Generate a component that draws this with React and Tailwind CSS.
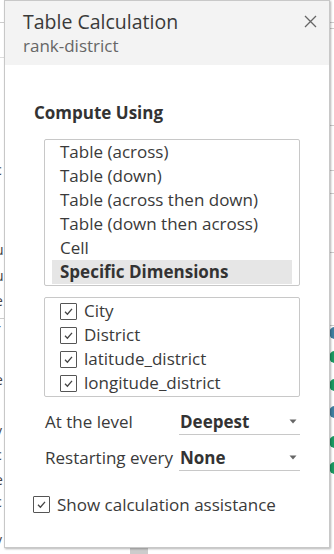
import React from "react";

function Check({ size = 17 }) {
  return (
    <span
      className="flex items-center justify-center border border-[#555] bg-white rounded-[1px] shrink-0"
      style={{ width: size, height: size }}
    >
      <svg width="11" height="11" viewBox="0 0 11 11" fill="none">
        <path d="M2 5.8 L4.4 8.2 L9 2.8" stroke="#444" strokeWidth="1.3" />
      </svg>
    </span>
  );
}

function Caret() {
  return (
    <svg width="8" height="5" viewBox="0 0 8 5">
      <path d="M0.5 0.5 L7.5 0.5 L4 4.5 Z" fill="#666" />
    </svg>
  );
}

export default function App() {
  const options = [
    "Table (across)",
    "Table (down)",
    "Table (across then down)",
    "Table (down then across)",
    "Cell",
  ];
  const dims = ["City", "District", "latitude_district", "longitude_district"];
  const left = [
    [140, "t"], [170, "c"], [193, "l"], [220, "l"], [250, "u"], [276, "u"], [301, "e"], [329, "r"], [380, "e"], [405, "("], [431, "v"], [455, "c"], [480, "e"], [502, "c"], [540, "v"],
  ];
  const dots = [
    [333, "#3f7fa0"], [357, "#1a9a62"], [385, "#1a9a62"], [412, "#3f7fa0"], [442, "#1a9a62"], [468, "#1a9a62"],
  ];
  return (
    <div
      className="relative w-[334px] h-[554px] bg-white overflow-hidden text-[#333]"
      style={{ fontFamily: "'Open Sans', 'Noto Sans', sans-serif" }}
    >
      {/* background content peeking out */}
      <div className="absolute left-0 top-[22px] w-[5px] border-t border-[#ccc]" />
      <div className="absolute left-0 top-[57px] w-[5px] border-t border-[#ddd]" />
      <div className="absolute left-0 top-[318px] w-[5px] border-t border-[#ccc]" />
      <div className="absolute left-0 top-0 w-[5px] h-[554px] overflow-hidden">
        {left.map(([y, ch], i) => (
          <div
            key={i}
            className="absolute left-[-5px] text-[14px] leading-none text-[#444]"
            style={{ top: y - 7 }}
          >
            {ch}
          </div>
        ))}
      </div>
      {[22, 28, 125, 170, 193, 252, 325].map((y) => (
        <div key={y} className="absolute right-0 w-[6px] border-t border-[#ccc]" style={{ top: y }} />
      ))}
      {dots.map(([y, c]) => (
        <div
          key={y}
          className="absolute left-[329px] w-[12px] h-[12px] rounded-full"
          style={{ top: y - 6, background: c }}
        />
      ))}
      <div className="absolute left-[130px] top-[548px] w-[18px] h-[6px] bg-[#ccc]" />

      {/* dialog */}
      <div className="absolute left-[4px] top-0 w-[326px] h-[548px] bg-white border border-[#c8c8c8] shadow-[1px_1px_2px_rgba(0,0,0,0.3)] flex flex-col">
        <div className="h-[64px] bg-[#f3f3f3] flex justify-between pl-[18px] pr-[12px] pt-[7px]">
          <div className="flex flex-col">
            <div className="text-[19.5px] leading-[27px] text-[#3a3a3a]">Table Calculation</div>
            <div className="text-[17px] leading-[22px] text-[#666]">rank-district</div>
          </div>
          <svg width="13" height="13" viewBox="0 0 13 13" className="mt-[7px]">
            <path d="M1 1 L12 12 M12 1 L1 12" stroke="#666" strokeWidth="1.3" />
          </svg>
        </div>

        <div className="pl-[29px] pt-[36px] text-[17px] font-bold leading-[24px] text-[#333]">
          Compute Using
        </div>

        <div className="ml-[39px] mt-[14px] w-[256px] border border-[#c8c8c8] rounded-[2px] px-[7px] pb-[1px] flex flex-col text-[#3a3a3a]">
          {options.map((o) => (
            <div key={o} className="h-[24px] leading-[23px] pl-[8px] text-[17px]">
              {o}
            </div>
          ))}
          <div className="h-[24px] leading-[23px] pl-[8px] text-[17px] font-bold bg-[#e6e6e6] text-[#333]">
            Specific Dimensions
          </div>
        </div>

        <div className="ml-[39px] mt-[11px] w-[256px] border border-[#c8c8c8] rounded-[2px] pl-[15px] py-[1px] flex flex-col text-[#3a3a3a]">
          {dims.map((d) => (
            <div key={d} className="h-[24px] flex items-center gap-[7px] text-[17px]">
              <Check />
              <span>{d}</span>
            </div>
          ))}
        </div>

        <div className="ml-[40px] mt-[12px] flex flex-col gap-[10px] text-[17px] text-[#3a3a3a]">
          <div className="flex items-center">
            <div className="w-[134px]">At the level</div>
            <div className="w-[121px] h-[26px] border-b border-[#c8c8c8] flex items-center justify-between pl-[1px] pr-[3px]">
              <span className="font-bold text-[#333]">Deepest</span>
              <Caret />
            </div>
          </div>
          <div className="flex items-center">
            <div className="w-[134px]">Restarting every</div>
            <div className="w-[121px] h-[26px] border-b border-[#c8c8c8] flex items-center justify-between pl-[1px] pr-[3px]">
              <span className="font-bold text-[#333]">None</span>
              <Caret />
            </div>
          </div>
        </div>

        <div className="ml-[28px] mt-[21px] flex items-center gap-[7px] text-[17px] text-[#3a3a3a]">
          <Check />
          <span>Show calculation assistance</span>
        </div>
      </div>
    </div>
  );
}
